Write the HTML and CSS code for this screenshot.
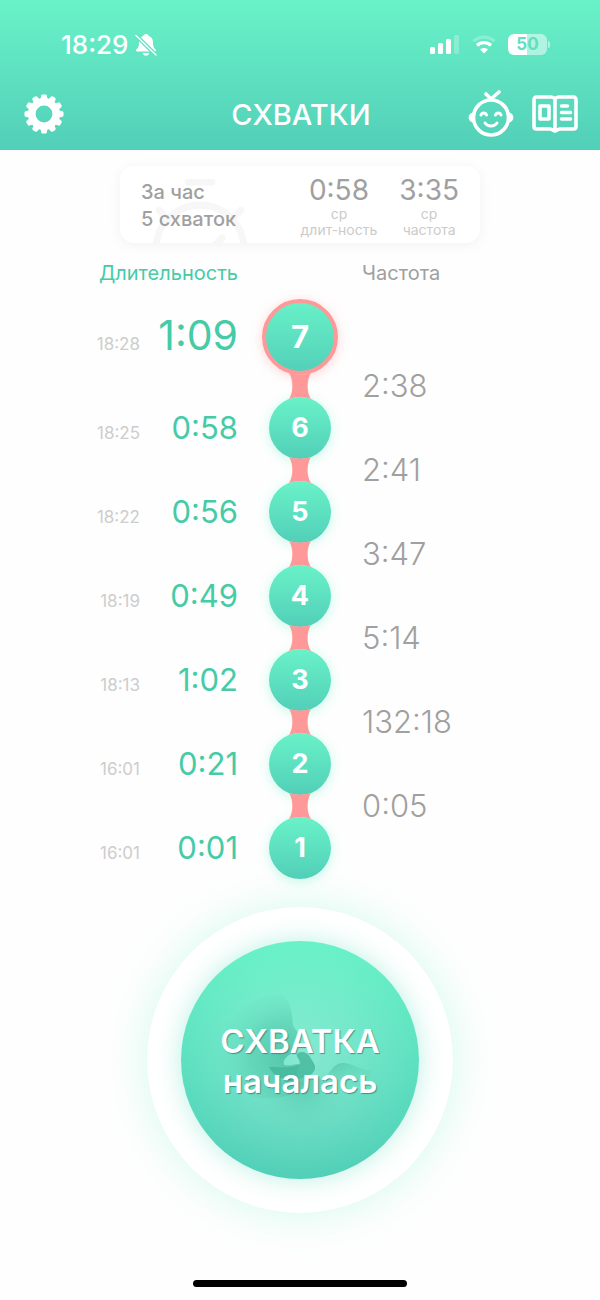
FILE: index.html
```
<!DOCTYPE html>
<html lang="ru">
<head>
    <meta charset="UTF-8">
    <meta name="viewport" content="width=device-width, initial-scale=1.0">
    <title>Схватки</title>
    <link rel="stylesheet" href="styles.css">
</head>
<body>
    <header class="header">
        <div class="status-bar">
            <div class="status-left">
                <span class="clock">18:29</span>
                <svg class="bell" viewBox="0 0 22 24" aria-hidden="true">
                    <path d="M11 1c-1.500 0-2.500.9-2.700 2.100C5.300 4 4 6.400 4 9.400c0 4.300-1 5.400-2.700 7.100-.8.900-.4 2 .8 2h17.800c1.200 0 1.600-1.100.8-2C19 14.800 18 13.700 18 9.400c0-3-1.300-5.400-4.300-6.300C13.500 1.900 12.500 1 11 1zM7.800 20h6.400c-.3 1.800-1.500 2.800-3.200 2.800S8.100 21.800 7.800 20z" fill="#fff"/>
                    <path d="M1 2.500l20 19.500" stroke="#62e2c2" stroke-width="4"/>
                    <path d="M1 2.500l20 19.500" stroke="#fff" stroke-width="1.500" stroke-linecap="round"/>
                </svg>
            </div>
            <div class="status-right">
                <svg class="signal" viewBox="0 0 30 19" fill="#fff" aria-hidden="true">
                    <rect x="0" y="12" width="5" height="7" rx="1.500"/>
                    <rect x="8" y="8" width="5" height="11" rx="1.500"/>
                    <rect x="16" y="4" width="5" height="15" rx="1.500"/>
                    <rect x="24" y="0" width="5" height="19" rx="1.500" opacity=".25"/>
                </svg>
                <svg class="wifi" viewBox="0 0 24 19" fill="none" aria-hidden="true">
                    <path d="M1.500 6.300c6-5.500 15-5.500 21 0" stroke="#fff" stroke-width="3.200" opacity=".25"/>
                    <path d="M5 10.500c4-3.800 10-3.800 14 0" stroke="#fff" stroke-width="3.400"/>
                    <path d="M12 18.500l-4-4c2.300-2 5.700-2 8 0z" fill="#fff"/>
                </svg>
                <span class="battery">50</span>
            </div>
        </div>
        <nav class="nav">
            <button class="icon-button" aria-label="Настройки">
                <svg class="gear" viewBox="-20 -20 40 40">
                    <circle r="12.200" fill="none" stroke="#fff" stroke-width="7.600"/>
                    <g fill="#fff">
                        <path id="tooth" d="M-3.400-15l.6-3.400Q-2.500-19.500-1.500-19.500h3Q2.500-19.500 2.800-18.400l.6 3.400z"/>
                        <use href="#tooth" transform="rotate(30)"/>
                        <use href="#tooth" transform="rotate(60)"/>
                        <use href="#tooth" transform="rotate(90)"/>
                        <use href="#tooth" transform="rotate(120)"/>
                        <use href="#tooth" transform="rotate(150)"/>
                        <use href="#tooth" transform="rotate(180)"/>
                        <use href="#tooth" transform="rotate(210)"/>
                        <use href="#tooth" transform="rotate(240)"/>
                        <use href="#tooth" transform="rotate(270)"/>
                        <use href="#tooth" transform="rotate(300)"/>
                        <use href="#tooth" transform="rotate(330)"/>
                    </g>
                </svg>
            </button>
            <h1 class="title">СХВАТКИ</h1>
            <div class="nav-actions">
                <button class="icon-button" aria-label="Малыш">
                    <svg class="baby" viewBox="0 0 46 48" fill="none" stroke="#fff" stroke-width="3.600" stroke-linecap="round">
                        <circle cx="23" cy="27.500" r="17.500"/>
                        <path d="M5 23.500c-4.500 1.500-4.500 6.500 0 8zM41 23.500c4.500 1.500 4.500 6.500 0 8z" fill="#fff" stroke-width="2"/>
                        <path d="M23 9l8-7M23 9l-5-5"/>
                        <path d="M13 25c1-2.600 4.500-2.600 5.500 0M27.500 25c1-2.600 4.500-2.600 5.500 0" stroke-width="3"/>
                        <path d="M17 33c2.800 4 9.200 4 12 0" stroke-width="3"/>
                    </svg>
                </button>
                <button class="icon-button" aria-label="Справочник">
                    <svg class="book" viewBox="0 0 46 38" fill="none" stroke="#fff" stroke-width="3.600" stroke-linecap="round" stroke-linejoin="round">
                        <path d="M23 4c-1-1.500-2-2-4-2H4.500C3 2 2 3 2 4.500v27C2 33 3 34 4.500 34H18c2.500 0 3.500 2 5 2s2.500-2 5-2h13.500c1.500 0 2.500-1 2.500-2.500v-27C44 3 43 2 41.500 2H27c-2 0-3 .5-4 2zM23 4v32"/>
                        <rect x="8" y="11" width="9" height="13"/>
                        <path d="M29.500 11h6M29.500 17.500h9M29.500 24h9"/>
                    </svg>
                </button>
            </div>
        </nav>
    </header>

    <main class="content">
        <section class="summary">
            <svg class="stopwatch" viewBox="0 0 100 64" fill="none" stroke="#f7f7f7" stroke-width="7" stroke-linecap="round" aria-hidden="true">
                <circle cx="50" cy="70" r="44"/>
                <path d="M38 3h24M9 31l6 6M91 31l-6 6M50 82l22-23"/>
            </svg>
            <p class="summary-count">За час<br>5 схваток</p>
            <div class="stat">
                <strong class="stat-value">0:58</strong>
                <span class="stat-label">ср<br>длит-ность</span>
            </div>
            <div class="stat">
                <strong class="stat-value">3:35</strong>
                <span class="stat-label">ср<br>частота</span>
            </div>
        </section>

        <div class="row headings">
            <h2 class="heading heading-duration">Длительность</h2>
            <h2 class="heading heading-interval">Частота</h2>
        </div>

        <!-- link between two circles, its ends follow their edges -->
        <svg class="defs" aria-hidden="true">
            <symbol id="neck" viewBox="0 0 24 26">
                <path d="M1 0Q12 3 23 0C18.500 7 18.500 19 23 26Q12 22 1 26C5.500 19 5.500 7 1 0z" fill="#ff9999"/>
            </symbol>
        </svg>

        <ol class="timeline">
            <li>
                <div class="row">
                    <div class="record"><time class="time">18:28</time><span class="duration duration-last">1:09</span></div>
                    <span class="node node-last">7</span>
                </div>
                <div class="row gap">
                    <svg class="neck"><use href="#neck"/></svg>
                    <span class="interval">2:38</span>
                </div>
            </li>
            <li>
                <div class="row">
                    <div class="record"><time class="time">18:25</time><span class="duration">0:58</span></div>
                    <span class="node">6</span>
                </div>
                <div class="row gap">
                    <svg class="neck"><use href="#neck"/></svg>
                    <span class="interval">2:41</span>
                </div>
            </li>
            <li>
                <div class="row">
                    <div class="record"><time class="time">18:22</time><span class="duration">0:56</span></div>
                    <span class="node">5</span>
                </div>
                <div class="row gap">
                    <svg class="neck"><use href="#neck"/></svg>
                    <span class="interval">3:47</span>
                </div>
            </li>
            <li>
                <div class="row">
                    <div class="record"><time class="time">18:19</time><span class="duration">0:49</span></div>
                    <span class="node">4</span>
                </div>
                <div class="row gap">
                    <svg class="neck"><use href="#neck"/></svg>
                    <span class="interval">5:14</span>
                </div>
            </li>
            <li>
                <div class="row">
                    <div class="record"><time class="time">18:13</time><span class="duration">1:02</span></div>
                    <span class="node">3</span>
                </div>
                <div class="row gap">
                    <svg class="neck"><use href="#neck"/></svg>
                    <span class="interval">132:18</span>
                </div>
            </li>
            <li>
                <div class="row">
                    <div class="record"><time class="time">16:01</time><span class="duration">0:21</span></div>
                    <span class="node">2</span>
                </div>
                <div class="row gap">
                    <svg class="neck"><use href="#neck"/></svg>
                    <span class="interval">0:05</span>
                </div>
            </li>
            <li>
                <div class="row">
                    <div class="record"><time class="time">16:01</time><span class="duration">0:01</span></div>
                    <span class="node">1</span>
                </div>
            </li>
        </ol>

        <div class="start-ring">
            <button class="start-button">
                <svg class="embryo" viewBox="183 183 714 714" aria-hidden="true">
                    <defs>
                        <radialGradient id="head" gradientUnits="userSpaceOnUse" cx="500" cy="530" r="215">
                            <stop offset="0" stop-color="#4cc0a4" stop-opacity=".85"/>
                            <stop offset=".5" stop-color="#54c9ad" stop-opacity=".55"/>
                            <stop offset="1" stop-color="#6adfc0" stop-opacity="0"/>
                        </radialGradient>
                        <radialGradient id="belly" gradientUnits="userSpaceOnUse" cx="545" cy="610" r="155">
                            <stop offset="0" stop-color="#4cc0a6" stop-opacity=".75"/>
                            <stop offset="1" stop-color="#6adfc0" stop-opacity="0"/>
                        </radialGradient>
                        <linearGradient id="knee" x1="0" y1="0" x2=".6" y2="1">
                            <stop offset="0" stop-color="#4cc0a6" stop-opacity=".75"/>
                            <stop offset="1" stop-color="#6adfc0" stop-opacity="0"/>
                        </linearGradient>
                    </defs>
                    <path d="M485 345c24 14 32 50 33 85 2 16 14 20 20 38 2 20-4 40-22 52-20 10-28 25-24 34 14 6 30-2 44-2 2 10-8 22-4 34l-20 60c-120 30-212-20-212-120 0-110 80-180 185-181z" fill="url(#head)"/>
                    <path d="M390 620c60 20 120-40 200-30 30 20 60 20 105 60 0 60-60 110-150 110-90 0-155-60-155-140z" fill="url(#belly)"/>
                    <path d="M530 522c18-12 34-4 42 12 8 14 18 24 11 38-12 22-48 20-68 32-28-8-60-20-68-44 24 0 64 6 89-6 12-8-7-20-6-32z" fill="#43b79b" opacity=".8"/>
                    <path d="M620 588c14-18 26-38 46-39 34 0 52 22 90 22 0 50-60 70-90 70-30-10-30-50-46-53z" fill="url(#knee)"/>
                </svg>
                <span class="start-label">СХВАТКА<br>началась</span>
            </button>
        </div>
    </main>

    <div class="home-indicator"></div>
</body>
</html>
```
FILE: styles.css
```
* {
    box-sizing: border-box;
}

body {
    margin: 0;
    min-height: 100vh;
    display: flex;
    flex-direction: column;
    background: #fefefe;
    font-family: Inter, "Liberation Sans", sans-serif;
    color: #a0a0a0;
}

h1,
h2,
p,
ol {
    margin: 0;
    padding: 0;
}

button {
    border: none;
    padding: 0;
    background: none;
    font-family: inherit;
    cursor: pointer;
}

svg {
    display: block;
}

/* header */

.header {
    padding-top: 11px;
    background: linear-gradient(#69f2c8, #52cfb8);
    color: #fff;
}

.status-bar {
    display: flex;
    justify-content: space-between;
    align-items: center;
    height: 67px;
    padding: 0 53px 0 61px;
}

.status-left,
.status-right {
    display: flex;
    align-items: center;
}

.status-left {
    gap: 7px;
}

.status-right {
    gap: 12px;
}

.clock {
    font-size: 26px;
    font-weight: 500;
}

.bell {
    width: 22px;
    height: 24px;
}

.signal {
    width: 30px;
    height: 19px;
}

.wifi {
    width: 24px;
    height: 19px;
}

.battery {
    position: relative;
    width: 39px;
    border-radius: 6px;
    background: linear-gradient(90deg, #fff 50%, rgba(255, 255, 255, 0.5) 50%);
    color: #62dfc0;
    font-size: 17px;
    font-weight: 700;
    line-height: 21px;
    text-align: center;
}

.battery::after {
    content: "";
    position: absolute;
    left: 40px;
    top: 7px;
    width: 2px;
    height: 7px;
    border-radius: 0 2px 2px 0;
    background: rgba(255, 255, 255, 0.5);
}

.nav {
    display: grid;
    grid-template-columns: 1fr auto 1fr;
    align-items: center;
    height: 72px;
    padding: 0 22px 0 24px;
}

.title {
    font-size: 29px;
    font-weight: 500;
}

.icon-button {
    justify-self: start;
}

.nav-actions {
    display: flex;
    justify-content: flex-end;
    align-items: center;
    gap: 18px;
}

.gear {
    width: 40px;
    height: 40px;
}

.baby {
    width: 46px;
    height: 48px;
}

.book {
    width: 46px;
    height: 38px;
}

/* summary card */

.content {
    display: flex;
    flex-direction: column;
    align-items: center;
    padding-top: 16px;
}

.summary {
    position: relative;
    display: flex;
    align-items: center;
    width: 60%;
    min-width: 358px;
    height: 77px;
    padding: 2px 21px 0;
    border-radius: 14px;
    background: #fff;
    box-shadow: 0 2px 14px rgba(0, 0, 0, 0.05);
    overflow: hidden;
}

.stopwatch {
    position: absolute;
    left: 30px;
    bottom: 0;
    width: 100px;
    height: 64px;
}

.summary-count {
    position: relative;
    flex: 1;
    font-size: 20px;
    font-weight: 500;
    line-height: 27px;
}

.stat {
    display: flex;
    flex-direction: column;
    align-items: center;
}

.stat + .stat {
    margin-left: 22px;
}

.stat-value {
    font-size: 28px;
    font-weight: 400;
    line-height: 32px;
}

.stat-label {
    color: #cbcbcb;
    font-size: 14px;
    line-height: 16px;
    text-align: center;
}

/* timeline */

.row {
    display: grid;
    grid-template-columns: 1fr 76px 1fr;
    column-gap: 24px;
    align-items: center;
}

.headings {
    width: 100%;
    margin: 18px 0 14px;
}

.heading {
    font-size: 20px;
    font-weight: 400;
    line-height: 24px;
}

.heading-duration {
    text-align: right;
    color: #45cba6;
}

.heading-interval {
    grid-column: 3;
}

.timeline {
    width: 100%;
    list-style: none;
}

.record {
    display: flex;
    justify-content: flex-end;
    align-items: baseline;
    padding-top: 4px;
    line-height: 40px;
}

.time {
    color: #cdcdcd;
    font-size: 17px;
}

.duration {
    width: 98px;
    color: #45cba6;
    font-size: 31px;
    text-align: right;
}

.duration-last {
    font-size: 41px;
}

.node {
    justify-self: center;
    width: 62px;
    height: 62px;
    border-radius: 50%;
    background: linear-gradient(#69f2c8, #52cfb8);
    box-shadow: 0 2px 12px rgba(105, 242, 200, 0.4);
    color: #fff;
    font-size: 27px;
    font-weight: 700;
    line-height: 62px;
    text-align: center;
}

.node-last {
    width: 76px;
    height: 76px;
    border: 4px solid #ff9999;
    background-origin: border-box;
    box-shadow: 0 2px 12px rgba(255, 153, 153, 0.4);
    font-size: 31px;
    line-height: 68px;
}

.gap {
    height: 22px;
}

.neck {
    grid-column: 2;
    justify-self: center;
    position: relative;
    z-index: 1;
    width: 24px;
    height: 26px;
    margin: -2px 0;
}

.interval {
    font-size: 31px;
    font-weight: 300;
    line-height: 22px;
}

.defs {
    position: absolute;
    width: 0;
    height: 0;
}

/* start button */

.start-ring {
    margin-top: 28px;
    padding: 34px;
    border-radius: 50%;
    background: #fff;
    box-shadow: 0 0 44px rgba(105, 242, 200, 0.28);
}

.start-button {
    position: relative;
    display: block;
    width: 238px;
    height: 238px;
    padding-top: 2px;
    border-radius: 50%;
    background:
        radial-gradient(circle, rgba(255, 255, 255, 0.26), rgba(255, 255, 255, 0) 70%),
        linear-gradient(#69f2c8, #52cfb8);
    box-shadow: 0 0 26px rgba(85, 220, 185, 0.4);
    color: #fff;
}

.embryo {
    position: absolute;
    inset: 0;
}

.start-label {
    position: relative;
    font-size: 33px;
    font-weight: 600;
    line-height: 40px;
    text-shadow: 1px 1px 1px rgba(50, 130, 125, 0.8);
}

.home-indicator {
    align-self: center;
    width: 214px;
    height: 7px;
    margin: auto 0 13px;
    border-radius: 4px;
    background: #000;
}
```
